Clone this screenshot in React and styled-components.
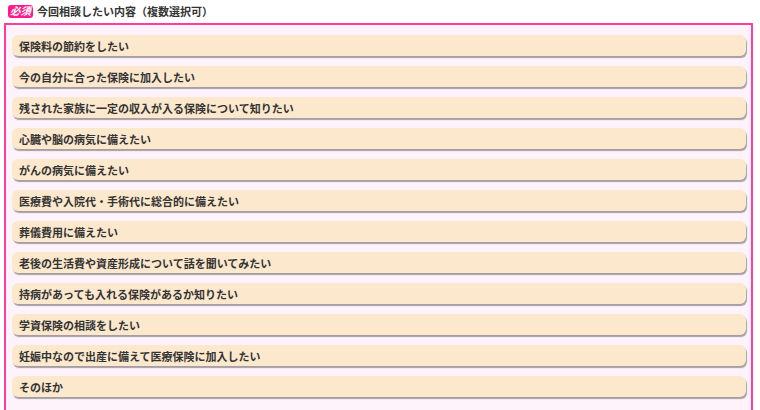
import styled, { createGlobalStyle } from "styled-components";

const GlobalStyle = createGlobalStyle`
  body {
    margin: 0;
    background: #ffffff;
    font-family: "Noto Sans CJK JP", "Noto Sans", sans-serif;
    color: #333333;
  }
`;

const OPTIONS = [
  "保険料の節約をしたい",
  "今の自分に合った保険に加入したい",
  "残された家族に一定の収入が入る保険について知りたい",
  "心臓や脳の病気に備えたい",
  "がんの病気に備えたい",
  "医療費や入院代・手術代に総合的に備えたい",
  "葬儀費用に備えたい",
  "老後の生活費や資産形成について話を聞いてみたい",
  "持病があっても入れる保険があるか知りたい",
  "学資保険の相談をしたい",
  "妊娠中なので出産に備えて医療保険に加入したい",
  "そのほか",
];

const App = () => {
  return (
    <>
      <GlobalStyle />
      <Wrapper>
        <Heading>
          <Badge>必須</Badge>
          <Label>今回相談したい内容（複数選択可）</Label>
        </Heading>
        <Box>
          {OPTIONS.map((text) => (
            <Option key={text}>{text}</Option>
          ))}
        </Box>
      </Wrapper>
    </>
  );
};

const Wrapper = styled.div`
  padding: 4px 7px 0 4px;
`;

const Heading = styled.div`
  display: flex;
  align-items: center;
  gap: 4px;
  height: 14px;
  padding-left: 4px;
  margin-bottom: 5px;
`;

const Badge = styled.span`
  display: inline-flex;
  align-items: center;
  justify-content: center;
  background: #ff1b8d;
  color: #ffffff;
  font-size: 10.5px;
  font-weight: 700;
  font-style: italic;
  border-radius: 3px;
  height: 13px;
  padding: 0 2px;
  line-height: 1;
`;

const Label = styled.span`
  font-size: 11px;
  font-weight: 700;
  color: #333333;
`;

const Box = styled.div`
  border: 2px solid #ff3da0;
  background: #fff3fb;
  padding: 10px 5px 24px 6px;
  display: flex;
  flex-direction: column;
  gap: 10px;
`;

const Option = styled.div`
  height: 21px;
  display: flex;
  align-items: center;
  padding-left: 7px;
  background: #fce8cd;
  border-radius: 6px;
  box-shadow: 1px 2px 1px rgba(0, 0, 0, 0.35);
  font-size: 11px;
  font-weight: 700;
  color: #333333;
`;

export default App;
